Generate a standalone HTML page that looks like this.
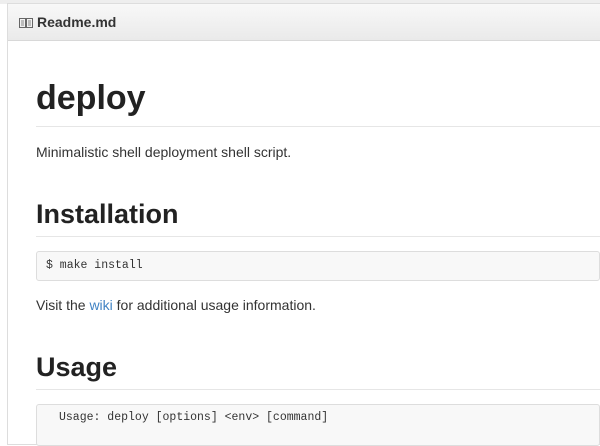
<!DOCTYPE html>
<html><head><style>
body{margin:0;width:600px;height:437px;overflow:hidden;background:#fff;font-family:"Liberation Sans",Arial,sans-serif;color:#333;position:relative}
.top{position:absolute;left:0;top:0;width:600px;height:4px;background:#eee}
.box{position:absolute;left:7px;top:3px;width:600px;height:440px;border:1px solid #ddd;border-right:none;background:#fff}
.hdr{height:36px;background:linear-gradient(#f8f8f8,#eaeaea);border-bottom:1px solid #d8d8d8;position:relative}
.hdr span{position:absolute;left:29px;top:10px;font-size:14px;font-weight:bold;color:#333}
.hdr svg{position:absolute;left:11px;top:14px}
h1,h2{margin:0;font-weight:bold;color:#222;border-bottom:1px solid #e6e6e6;position:absolute;left:36px;right:0}
h1{font-size:34px;top:80px;height:46px;line-height:36px}
h2{font-size:27px;line-height:30px}
p{margin:0;position:absolute;left:36px;font-size:14px}
a{color:#4183c4;text-decoration:none}
pre{margin:0;position:absolute;left:36px;right:0;background:#f8f8f8;border:1px solid #ddd;border-radius:3px;font-family:"Liberation Mono",monospace;font-size:11.5px;color:#333;padding:0 9px}
</style></head><body>
<div class="top"></div>
<div class="box"><div class="hdr"><svg width="14" height="10" viewBox="0 0 14 10"><rect x="0.5" y="0.5" width="6" height="9" fill="none" stroke="#666"/><rect x="7.5" y="0.5" width="6" height="9" fill="none" stroke="#666"/><path d="M2 3h3M2 5h3M2 7h3M9 3h3M9 5h3M9 7h3" stroke="#888"/></svg><span>Readme.md</span></div></div>
<h1>deploy</h1>
<p style="top:144px">Minimalistic shell deployment shell script.</p>
<h2 style="top:199px;height:37px">Installation</h2>
<pre style="top:251px;height:28px;line-height:27px">$ make install</pre>
<p style="top:297px">Visit the <a>wiki</a> for additional usage information.</p>
<h2 style="top:352px;height:37px">Usage</h2>
<pre style="top:404px;height:40px;line-height:26px;padding-left:22px">Usage: deploy [options] &lt;env&gt; [command]</pre>
</body></html>
